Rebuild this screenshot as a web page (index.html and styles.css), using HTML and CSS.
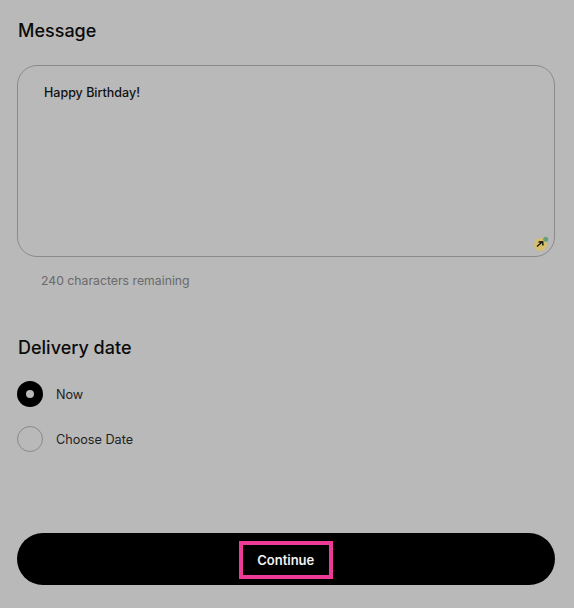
FILE: index.html
```html
<!DOCTYPE html>
<html lang="en">
<head>
<meta charset="utf-8">
<title>Message</title>
<link rel="stylesheet" href="styles.css">
</head>
<body>
<main class="page">
  <h2 class="heading">Message</h2>
  <div class="message-box">
    <p class="message-text">Happy Birthday!</p>
    <span class="grammar-badge">
      <svg viewBox="0 0 24 24" width="24" height="24">
        <circle cx="11.5" cy="14.5" r="6.5" fill="#d8bf6c"/>
        <circle cx="16.7" cy="9.3" r="2.5" fill="#64a27c"/>
        <path d="M8 16.5 L12.5 12.5 M9.5 12 L13.6 11.8 L14 15.5" fill="none" stroke="#1d1c12" stroke-width="1.5"/>
      </svg>
    </span>
  </div>
  <p class="counter">240 characters remaining</p>
  <h2 class="heading delivery">Delivery date</h2>
  <div class="options">
    <div class="option"><span class="radio selected"></span><span class="option-label">Now</span></div>
    <div class="option"><span class="radio"></span><span class="option-label">Choose Date</span></div>
  </div>
  <button class="continue" type="button"><span class="continue-label">Continue</span></button>
</main>
</body>
</html>
```

FILE: styles.css
```css
* { box-sizing: border-box; }
html, body { margin: 0; height: 100%; }
body {
  background: #b9b9b9;
  font-family: Inter, "Liberation Sans", sans-serif;
  color: #000;
  overflow: hidden;
}
.page {
  display: flex;
  flex-direction: column;
  height: 608px;
  padding: 20px 19px 0 17px;
}
.heading {
  margin: 0;
  padding-left: 1px;
  font-size: 18px;
  line-height: 22px;
  font-weight: 500;
  color: #0b0b0b;
}
.message-box {
  position: relative;
  height: 192px;
  margin-top: 23px;
  padding: 19px 26px;
  border: 1px solid #8a8a8a;
  border-radius: 20px;
}
.message-text {
  margin: 0;
  font-size: 12.5px;
  line-height: 16px;
  font-weight: 500;
  color: #111;
}
.grammar-badge {
  position: absolute;
  right: 1px;
  bottom: 2px;
  width: 24px;
  height: 24px;
}
.counter {
  margin: 15px 0 0 24px;
  font-size: 12.25px;
  line-height: 18px;
  color: #6a6a6a;
}
.delivery { margin-top: 47px; }
.options {
  display: flex;
  flex-direction: column;
  gap: 19px;
  margin-top: 22px;
}
.option {
  display: flex;
  align-items: center;
  gap: 13px;
  font-size: 12.65px;
  color: #222;
}
.option-label {
  padding-top: 2px;
  line-height: 24px;
}
.radio {
  width: 26px;
  height: 26px;
  border: 1px solid #8a8a8a;
  border-radius: 50%;
}
.radio.selected {
  border: 9px solid #000;
  background: #b9b9b9;
}
.continue {
  display: flex;
  align-items: center;
  justify-content: center;
  height: 52px;
  margin-top: 81px;
  border: 0;
  border-radius: 26px;
  background: #000;
  color: #f2f2f2;
  font: 600 13px/16px Inter, "Liberation Sans", sans-serif;
}
.continue-label {
  margin-top: 2px;
  padding: 6.5px 15px 7.5px 14.5px;
  outline: 4px solid #ee3a97;
  outline-offset: 0;
}
```
